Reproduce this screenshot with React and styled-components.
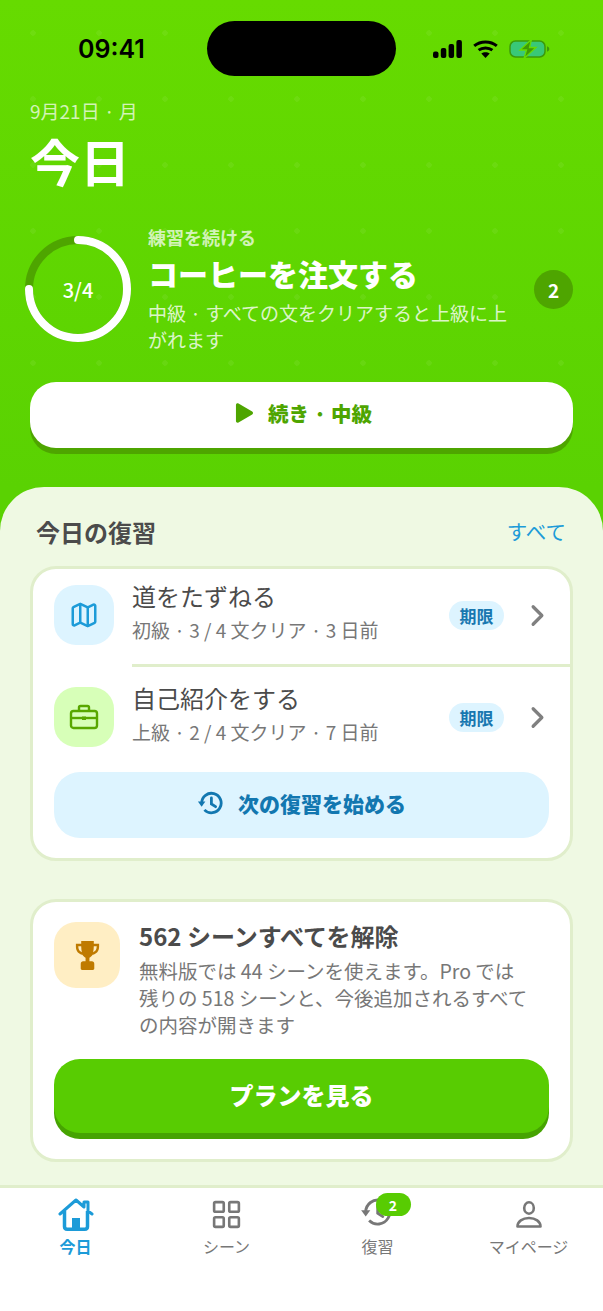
import React from "react";
import styled, { createGlobalStyle } from "styled-components";
import { Map as MapIcon, LayoutGrid, ChevronRight } from "lucide-react";

const GlobalStyle = createGlobalStyle`
  * { box-sizing: border-box; }
  html, body { margin: 0; padding: 0; background: #fff; }
  body { font-family: "Noto Sans CJK JP", "Noto Sans", sans-serif; }
`;

const Screen = styled.div`
  width: 603px;
  height: 1311px;
  display: flex;
  flex-direction: column;
  overflow: hidden;
  background: linear-gradient(180deg, #66db00 0, #5ad202 487px);
`;

const Hero = styled.header`
  height: 487px;
  flex-shrink: 0;
  background-image: radial-gradient(circle, rgba(255, 255, 255, 0.06) 2.5px, transparent 3px);
  background-size: 66px 66px;
`;

const StatusBar = styled.div`
  height: 97px;
  padding: 21px 53px 0 78px;
  display: flex;
  justify-content: space-between;
  align-items: flex-start;
`;

const Clock = styled.span`
  margin-top: 11px;
  font-family: Inter, sans-serif;
  font-size: 25px;
  line-height: 34px;
  font-weight: 600;
  color: #000;
`;

const Island = styled.div`
  width: 189px;
  height: 55px;
  margin-left: 25px;
  border-radius: 28px;
  background: #000;
`;

const StatusIcons = styled.div`
  margin-top: 19px;
  display: flex;
  align-items: center;
  gap: 11px;
`;

const HeroHead = styled.div`
  padding: 0 30px;
`;

const DateText = styled.div`
  font-size: 19px;
  line-height: 28px;
  color: rgba(255, 255, 255, 0.72);
`;

const PageTitle = styled.h1`
  margin: 0;
  font-size: 50px;
  line-height: 70px;
  font-weight: 700;
  color: #fff;
`;

const ContinueRow = styled.div`
  margin-top: 30px;
  padding: 0 30px 0 25px;
  display: flex;
  align-items: center;
`;

const Ring = styled.div`
  position: relative;
  width: 106px;
  height: 106px;
  flex-shrink: 0;
`;

const RingLabel = styled.span`
  position: absolute;
  inset: 0;
  display: flex;
  align-items: center;
  justify-content: center;
  font-size: 20px;
  font-weight: 500;
  color: #fff;
`;

const ContinueText = styled.div`
  flex: 1;
  margin-left: 17px;
  min-width: 0;
`;

const Eyebrow = styled.div`
  font-size: 18px;
  line-height: 24px;
  font-weight: 700;
  color: rgba(255, 255, 255, 0.72);
`;

const LessonTitle = styled.div`
  margin-top: 4px;
  font-size: 30px;
  line-height: 40px;
  font-weight: 900;
  color: #fff;
`;

const LessonSub = styled.div`
  margin-top: 6px;
  width: 372px;
  font-size: 19px;
  line-height: 27px;
  color: rgba(255, 255, 255, 0.8);
`;

const RoundBadge = styled.div`
  width: 39px;
  height: 39px;
  flex-shrink: 0;
  border-radius: 50%;
  background: #4ea500;
  color: #fff;
  font-size: 19px;
  font-weight: 700;
  display: flex;
  align-items: center;
  justify-content: center;
`;

const BigButton = styled.button`
  width: 100%;
  display: flex;
  align-items: center;
  justify-content: center;
  gap: ${({ $gap }) => $gap || 14}px;
  height: ${({ $height }) => $height || 66}px;
  border: none;
  border-radius: 26px;
  padding: 0 0 4px ${({ $shift }) => $shift || 0}px;
  font-family: inherit;
  font-size: ${({ $size }) => $size || 20.5}px;
  font-weight: 900;
  color: ${({ $color }) => $color};
  background: ${({ $bg }) => $bg};
  box-shadow: ${({ $shadow }) => ($shadow ? `0 6px 0 ${$shadow}` : "none")};
`;

const HeroButtonWrap = styled.div`
  margin-top: 29px;
  padding: 0 30px;
`;

const Sheet = styled.main`
  flex: 1;
  min-height: 0;
  padding: 24px 30px 0;
  border-radius: 44px 44px 0 0;
  background: #eff9e3;
`;

const SectionHead = styled.div`
  padding: 0 7px 0 6px;
  display: flex;
  justify-content: space-between;
  align-items: center;
  height: 40px;
`;

const SectionTitle = styled.h2`
  margin: 0;
  font-size: 24px;
  font-weight: 700;
  color: #4b4b4b;
`;

const SeeAll = styled.span`
  font-size: 20.5px;
  color: #1c9bd8;
`;

const Card = styled.section`
  margin-top: ${({ $top }) => $top}px;
  width: 543px;
  padding: ${({ $pad }) => $pad};
  border: 3px solid #e0eecb;
  border-radius: 26px;
  background: #fff;
`;

const ReviewRow = styled.div`
  display: flex;
  align-items: flex-start;
  padding: ${({ $first }) => ($first ? "16px 15px 19px 21px" : "20px 15px 25px 21px")};
`;

const Divider = styled.div`
  height: 3px;
  margin-left: 99px;
  background: #e0eecb;
`;

const IconTile = styled.div`
  width: ${({ $w }) => $w}px;
  height: ${({ $h }) => $h}px;
  flex-shrink: 0;
  border-radius: 22px;
  display: flex;
  align-items: center;
  justify-content: center;
  background: ${({ $bg }) => $bg};
`;

const RowText = styled.div`
  flex: 1;
  margin: -2px 0 0 18px;
`;

const RowTitle = styled.div`
  font-size: 24px;
  line-height: 26px;
  color: #4b4b4b;
`;

const RowSub = styled.div`
  margin-top: 9px;
  font-size: 19px;
  line-height: 24px;
  color: #777;
`;

const Pill = styled.span`
  align-self: center;
  width: 55px;
  height: 29px;
  border-radius: 15px;
  background: #ddf4ff;
  color: #1877b0;
  font-size: 17px;
  font-weight: 700;
  display: flex;
  align-items: center;
  justify-content: center;
`;

const ChevronSlot = styled.div`
  align-self: center;
  width: 36px;
  margin-left: 15px;
  display: flex;
  justify-content: center;
  color: #808080;
`;

const ReviewButtonWrap = styled.div`
  padding: 0 21px 20px;
`;

const PromoTop = styled.div`
  display: flex;
  align-items: flex-start;
  gap: 19px;
`;

const PromoText = styled.div`
  flex: 1;
`;

const PromoTitle = styled.div`
  font-size: 24px;
  line-height: 28px;
  font-weight: 700;
  color: #4b4b4b;
`;

const PromoBody = styled.div`
  margin-top: 7px;
  width: 392px;
  font-size: 19.5px;
  line-height: 27px;
  color: #777;
`;

const PromoButtonWrap = styled.div`
  margin-top: 21px;
`;

const TabBar = styled.nav`
  height: 126px;
  flex-shrink: 0;
  border-top: 3px solid #e0eecb;
  background: #fff;
  display: grid;
  grid-template-columns: repeat(4, 151px);
`;

const Tab = styled.div`
  padding-top: 8px;
  display: flex;
  flex-direction: column;
  align-items: center;
  color: ${({ $active }) => ($active ? "#1c9bd8" : "#777")};
`;

const TabIcon = styled.div`
  position: relative;
  width: 36px;
  height: 36px;
  padding: 0 ${({ $nudge }) => $nudge || 0}px ${({ $nudge }) => $nudge || 0}px 0;
  display: flex;
  align-items: center;
  justify-content: center;
`;

const TabLabel = styled.span`
  margin-top: 2px;
  font-size: 16px;
  line-height: 24px;
  font-weight: ${({ $active }) => ($active ? 700 : 400)};
`;

const TabBadge = styled.span`
  position: absolute;
  top: -3px;
  left: 16px;
  width: 35px;
  height: 23px;
  border-radius: 12px;
  background: #58cc02;
  color: #fff;
  font-size: 14px;
  font-weight: 700;
  display: flex;
  align-items: center;
  justify-content: center;
`;

const SignalIcon = () => (
  <svg width="29" height="18" viewBox="0 0 29 18" fill="#000">
    <rect x="0" y="11.500" width="5.500" height="6.500" rx="2" />
    <rect x="7.800" y="8" width="5.500" height="10" rx="2" />
    <rect x="15.600" y="4" width="5.500" height="14" rx="2" />
    <rect x="23.400" y="0" width="5.500" height="18" rx="2" />
  </svg>
);

const WifiIcon = () => (
  <svg width="25" height="18" viewBox="0 0 25 18" fill="none" stroke="#000" strokeWidth="3">
    <path d="M1.200 5.800C7.500.6 17.500.6 23.800 5.800" />
    <path d="M5.600 10.200c3.900-3.100 9.900-3.100 13.800 0" />
    <path d="M12.500 18 8.300 13.600c2.400-1.800 6-1.800 8.400 0Z" fill="#000" stroke="none" />
  </svg>
);

const BatteryIcon = () => (
  <svg width="41" height="18" viewBox="0 0 41 18">
    <rect x="1" y="1" width="35" height="16" rx="5.500" fill="#39c878" stroke="#3c9a0a" strokeWidth="1.500" />
    <path d="M38 6.200c1.300.4 2.300 1.500 2.300 2.800s-1 2.400-2.300 2.800Z" fill="#3c9a0a" />
    <path d="M22.500-.5 11 10h6.500l-2.500 8.500L27 7.500h-6.500Z" fill="#3f9a05" stroke="#66db00" strokeWidth="1.300" />
  </svg>
);

const PlayIcon = () => (
  <svg width="19" height="22" viewBox="0 0 20 22" fill="#4ea500">
    <path d="M1 2.500C1 1 2.500.3 3.700 1l14.400 8.500c1.200.7 1.200 2.400 0 3L3.700 21C2.500 21.700 1 21 1 19.500Z" />
  </svg>
);

const BriefcaseIcon = () => (
  <svg width="30" height="26" viewBox="0 0 30 26" fill="none" stroke="#58a700" strokeWidth="2.400" strokeLinejoin="round">
    <rect x="2" y="7" width="26" height="17" rx="2.500" />
    <path d="M10 7V3.500C10 2.500 10.800 2 11.500 2h7c.8 0 1.500.6 1.500 1.500V7" />
    <path d="M2 14h26" />
    <rect x="13" y="12.500" width="4" height="3.500" fill="#58a700" stroke="none" />
  </svg>
);

const TrophyIcon = () => (
  <svg width="27" height="30" viewBox="0 0 26 31" fill="#bf7a00">
    <path d="M6.500 1h13v3H25v3c0 4.500-2.800 7.600-6.700 8.300-1 1.500-2.200 2.500-3.300 3V22h2.500c1.600 0 2.500 1 2.500 2.500v5c0 .8-.5 1.500-1.500 1.500h-11C6.500 31 6 30.300 6 29.500v-5C6 23 7 22 8.500 22H11v-3.700c-1.100-.5-2.300-1.500-3.300-3C3.800 14.600 1 11.500 1 7V4h5.500Zm-3 5.500V7c0 2.700 1.400 4.800 3.700 5.600-.4-1.800-.7-3.800-.7-6.100Zm19 0h-3c0 2.300-.3 4.300-.7 6.100 2.300-.8 3.700-2.900 3.700-5.600Z" />
  </svg>
);

const HomeIcon = () => (
  <svg width="36" height="33" viewBox="0 0 36 33" fill="none">
    <path d="M2 16 18 2l8 7V4h4v9l4 3" stroke="#1c9bd8" strokeWidth="3" strokeLinejoin="round" strokeLinecap="round" />
    <path d="M6.500 13v15.500c0 1.800 1 2.700 2.700 2.700h17.600c1.700 0 2.700-.9 2.700-2.700V13" stroke="#1c9bd8" strokeWidth="3.500" />
    <rect x="14" y="20" width="8" height="12" fill="#1c9bd8" />
  </svg>
);

const PersonIcon = () => (
  <svg width="26" height="27" viewBox="0 0 26 27" fill="none" stroke="#777" strokeWidth="2.600">
    <ellipse cx="13" cy="7" rx="4.800" ry="5.700" />
    <path d="M1.500 25.500c0-5 5-8.500 11.500-8.500s11.500 3.500 11.500 8.500Z" strokeLinejoin="round" />
  </svg>
);

// clock with a filled arrow head on the left, used by the button and the tab
const ClockBackIcon = ({ size, weight }) => (
  <svg width={size} height={size} viewBox="0 0 28 28" fill="none" stroke="currentColor" strokeWidth={weight}>
    <path d="M5 14a10.500 10.500 0 1 1 3 7.400" />
    <path d="M1 12.500h8L5 18Z" fill="currentColor" stroke="none" />
    <path d="M15.500 8.500V15l4.500 3" strokeLinecap="round" />
  </svg>
);

const ProgressRing = () => (
  <Ring>
    <svg width="106" height="106" viewBox="0 0 106 106" fill="none" strokeWidth="8">
      <circle cx="53" cy="53" r="49" stroke="#4ea500" />
      <path d="M53 4a49 49 0 1 1-49 49" stroke="#fff" strokeLinecap="round" />
    </svg>
    <RingLabel>3/4</RingLabel>
  </Ring>
);

const REVIEWS = [
  {
    title: "道をたずねる",
    sub: "初級 · 3 / 4 文クリア · 3 日前",
    bg: "#ddf4ff",
    icon: <MapIcon size={30} color="#1c9bd8" strokeWidth={2} />,
  },
  {
    title: "自己紹介をする",
    sub: "上級 · 2 / 4 文クリア · 7 日前",
    bg: "#d7ffb8",
    icon: <BriefcaseIcon />,
  },
];

export default function App() {
  return (
    <Screen>
      <GlobalStyle />
      <Hero>
        <StatusBar>
          <Clock>09:41</Clock>
          <Island />
          <StatusIcons>
            <SignalIcon />
            <WifiIcon />
            <BatteryIcon />
          </StatusIcons>
        </StatusBar>
        <HeroHead>
          <DateText>9月21日 · 月</DateText>
          <PageTitle>今日</PageTitle>
        </HeroHead>
        <ContinueRow>
          <ProgressRing />
          <ContinueText>
            <Eyebrow>練習を続ける</Eyebrow>
            <LessonTitle>コーヒーを注文する</LessonTitle>
            <LessonSub>中級 · すべての文をクリアすると上級に上がれます</LessonSub>
          </ContinueText>
          <RoundBadge>2</RoundBadge>
        </ContinueRow>
        <HeroButtonWrap>
          <BigButton $bg="#fff" $color="#4ea500" $shadow="#4ea500" $shift={4}>
            <PlayIcon />
            続き · 中級
          </BigButton>
        </HeroButtonWrap>
      </Hero>
      <Sheet>
        <SectionHead>
          <SectionTitle>今日の復習</SectionTitle>
          <SeeAll>すべて</SeeAll>
        </SectionHead>
        <Card $top={15} $pad="0">
          {REVIEWS.map((item, i) => (
            <React.Fragment key={item.title}>
              {i > 0 && <Divider />}
              <ReviewRow $first={i === 0}>
                <IconTile $w={60} $h={60} $bg={item.bg}>
                  {item.icon}
                </IconTile>
                <RowText>
                  <RowTitle>{item.title}</RowTitle>
                  <RowSub>{item.sub}</RowSub>
                </RowText>
                <Pill>期限</Pill>
                <ChevronSlot>
                  <ChevronRight size={35} strokeWidth={2.2} />
                </ChevronSlot>
              </ReviewRow>
            </React.Fragment>
          ))}
          <ReviewButtonWrap>
            <BigButton $bg="#ddf4ff" $color="#1277b0" $size={21} $gap={15}>
              <ClockBackIcon size={26} weight={3} />
              次の復習を始める
            </BigButton>
          </ReviewButtonWrap>
        </Card>
        <Card $top={38} $pad="20px 21px 26px">
          <PromoTop>
            <IconTile $w={66} $h={66} $bg="#ffeec4">
              <TrophyIcon />
            </IconTile>
            <PromoText>
              <PromoTitle>562 シーンすべてを解除</PromoTitle>
              <PromoBody>
                無料版では 44 シーンを使えます。Pro では残りの 518 シーンと、今後追加されるすべての内容が開きます
              </PromoBody>
            </PromoText>
          </PromoTop>
          <PromoButtonWrap>
            <BigButton $bg="#58cc02" $color="#fff" $shadow="#46a302" $height={74} $size={24}>
              プランを見る
            </BigButton>
          </PromoButtonWrap>
        </Card>
      </Sheet>
      <TabBar>
        <Tab $active>
          <TabIcon>
            <HomeIcon />
          </TabIcon>
          <TabLabel $active>今日</TabLabel>
        </Tab>
        <Tab>
          <TabIcon>
            <LayoutGrid size={33} strokeWidth={1.9} />
          </TabIcon>
          <TabLabel>シーン</TabLabel>
        </Tab>
        <Tab>
          <TabIcon $nudge={4}>
            <ClockBackIcon size={32} weight={2.500} />
            <TabBadge>2</TabBadge>
          </TabIcon>
          <TabLabel>復習</TabLabel>
        </Tab>
        <Tab>
          <TabIcon>
            <PersonIcon />
          </TabIcon>
          <TabLabel>マイページ</TabLabel>
        </Tab>
      </TabBar>
    </Screen>
  );
}
